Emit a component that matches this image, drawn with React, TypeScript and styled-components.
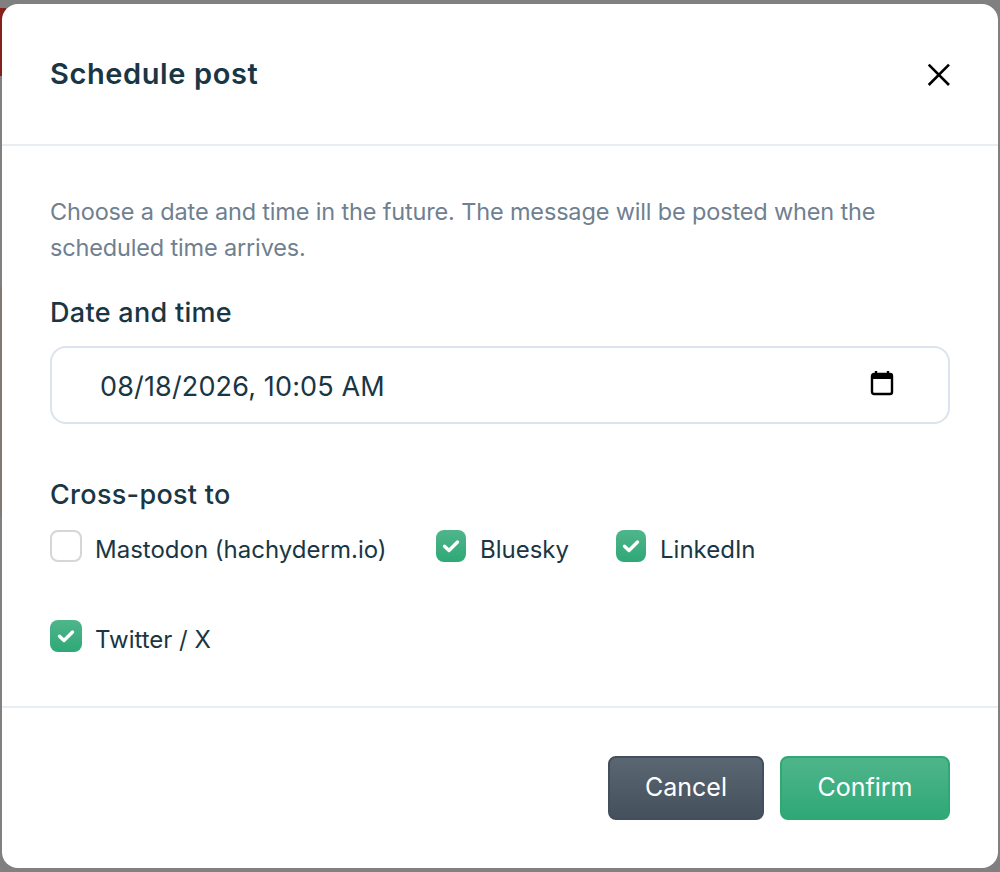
import * as React from 'react';
import styled, { createGlobalStyle } from 'styled-components';

const GlobalStyle = createGlobalStyle`
    html, body {
        margin: 0;
        padding: 0;
        height: 100%;
    }
    body {
        background: #808080;
        font-family: 'Inter', 'Liberation Sans', sans-serif;
    }
`;

// dimmed page behind the dialog, only its edges show
const Backdrop = styled.div`
    box-sizing: border-box;
    width: 1000px;
    height: 872px;
    padding: 4px 2px;
    background:
        linear-gradient(#85201b, #85201b) 0 8px / 6px 68px no-repeat,
        linear-gradient(#7f7a75, #7f7a75) 0 287px / 2px 230px no-repeat,
        #808080;
    overflow: hidden;
`;

const Dialog = styled.div`
    display: flex;
    flex-direction: column;
    height: 864px;
    background: #fff;
    border-radius: 16px;
`;

const Header = styled.header`
    box-sizing: border-box;
    display: flex;
    align-items: center;
    justify-content: space-between;
    height: 142px;
    padding: 0 48px;
    border-bottom: 2px solid #e9eef3;
`;

const Title = styled.h2`
    margin: 0 0 2px;
    font-size: 29px;
    font-weight: 600;
    letter-spacing: 0.6px;
    color: #1a3644;
`;

const CloseButton = styled.button`
    display: flex;
    padding: 0;
    border: none;
    background: none;
`;

const Body = styled.div`
    flex: 1;
    padding: 48px 48px 0;
`;

const Hint = styled.p`
    margin: 0;
    font-size: 23.5px;
    line-height: 36px;
    letter-spacing: -0.16px;
    color: #6f8090;
`;

const Label = styled.div`
    margin-top: 27px;
    font-size: 27px;
    line-height: 40px;
    font-weight: 500;
    letter-spacing: 0.3px;
    color: #1a3644;
`;

const DateField = styled.div`
    box-sizing: border-box;
    display: flex;
    align-items: center;
    justify-content: space-between;
    height: 78px;
    margin-top: 13px;
    margin-bottom: 51px;
    padding: 2px 54px 0 48px;
    border: 2px solid #dde3ec;
    border-radius: 16px;
    font-size: 27px;
    letter-spacing: 0.15px;
    color: #1a3644;
`;

const CalendarIcon = styled.svg`
    margin-bottom: 6px;
`;

const Targets = styled.div`
    display: flex;
    flex-wrap: wrap;
    row-gap: 54px;
    column-gap: 48px;
    margin-top: 15px;
`;

const Target = styled.label<{ $width: number }>`
    display: flex;
    align-items: flex-start;
    gap: 13px;
    width: ${p => p.$width}px;
    font-size: 24px;
    line-height: 32px;
    white-space: nowrap;
    color: #1a3644;
`;

const TargetName = styled.span`
    margin-top: 4px;
`;

// in the first row the two short items are squeezed by 2px
const Box = styled.span<{ $checked?: boolean; $narrow?: boolean }>`
    box-sizing: border-box;
    display: flex;
    align-items: center;
    justify-content: center;
    flex: none;
    width: ${p => (p.$narrow ? '30px' : '32px')};
    height: 32px;
    margin-right: ${p => (p.$narrow ? '1px' : '0')};
    border-radius: 8px;
    border: ${p => (p.$checked ? 'none' : '2px solid #d6d6d6')};
    background: ${p => (p.$checked ? 'linear-gradient(#4fb58b, #2fa876)' : '#fff')};
`;

const Tick = styled.svg`
    margin-bottom: 1px;
`;

const Footer = styled.footer`
    box-sizing: border-box;
    display: flex;
    justify-content: flex-end;
    gap: 16px;
    height: 162px;
    padding: 48px 48px 0;
    border-top: 2px solid #e9eef3;
`;

const Button = styled.button<{ $primary?: boolean }>`
    box-sizing: border-box;
    height: 64px;
    width: ${p => (p.$primary ? '170px' : '156px')};
    border-radius: 8px;
    border: 2px solid ${p => (p.$primary ? '#2fa876' : '#434f5c')};
    background: ${p => (p.$primary ? 'linear-gradient(#4fb58b, #2fa876)' : 'linear-gradient(#5b6673, #45505d)')};
    color: #fff;
    font-family: inherit;
    font-size: 25px;
    font-weight: 400;
    padding: 0 0 2px;
`;

const targets = [
    { name: 'Mastodon (hachyderm.io)', checked: false, narrow: false, width: 338 },
    { name: 'Bluesky', checked: true, narrow: true, width: 132 },
    { name: 'LinkedIn', checked: true, narrow: true, width: 140 },
    { name: 'Twitter / X', checked: true, narrow: false, width: 160 },
];

const App: React.FC = () => (
    <Backdrop>
        <GlobalStyle />
        <Dialog>
            <Header>
                <Title>Schedule post</Title>
                <CloseButton aria-label="Close">
                    <svg width="24" height="24" viewBox="0 0 24 24">
                        <path d="M2.7 2.7 L23 23 M23 2.7 L2.7 23" stroke="#000" strokeWidth="2.6" fill="none" />
                    </svg>
                </CloseButton>
            </Header>
            <Body>
                <Hint>Choose a date and time in the future. The message will be posted when the scheduled time arrives.</Hint>
                <Label>Date and time</Label>
                <DateField>
                    <span>08/18/2026, 10:05 AM</span>
                    <CalendarIcon width="24" height="26" viewBox="0 0 24 26">
                        <path d="M6 1v3M18 1v3" stroke="#000" strokeWidth="2.4" />
                        <rect x="2" y="4" width="20" height="20" rx="2" fill="none" stroke="#000" strokeWidth="2.4" />
                        <rect x="2" y="4" width="20" height="5" fill="#000" />
                    </CalendarIcon>
                </DateField>
                <Label>Cross-post to</Label>
                <Targets>
                    {targets.map(t => (
                        <Target key={t.name} $width={t.width}>
                            <Box $checked={t.checked} $narrow={t.narrow}>
                                {t.checked && (
                                    <Tick width="18" height="14" viewBox="0 0 18 14">
                                        <path d="M2.5 7.2 L7 11.5 L15.5 3" fill="none" stroke="#fff" strokeWidth="3.4" strokeLinecap="round" strokeLinejoin="round" />
                                    </Tick>
                                )}
                            </Box>
                            <TargetName>{t.name}</TargetName>
                        </Target>
                    ))}
                </Targets>
            </Body>
            <Footer>
                <Button>Cancel</Button>
                <Button $primary>Confirm</Button>
            </Footer>
        </Dialog>
    </Backdrop>
);

export default App;
